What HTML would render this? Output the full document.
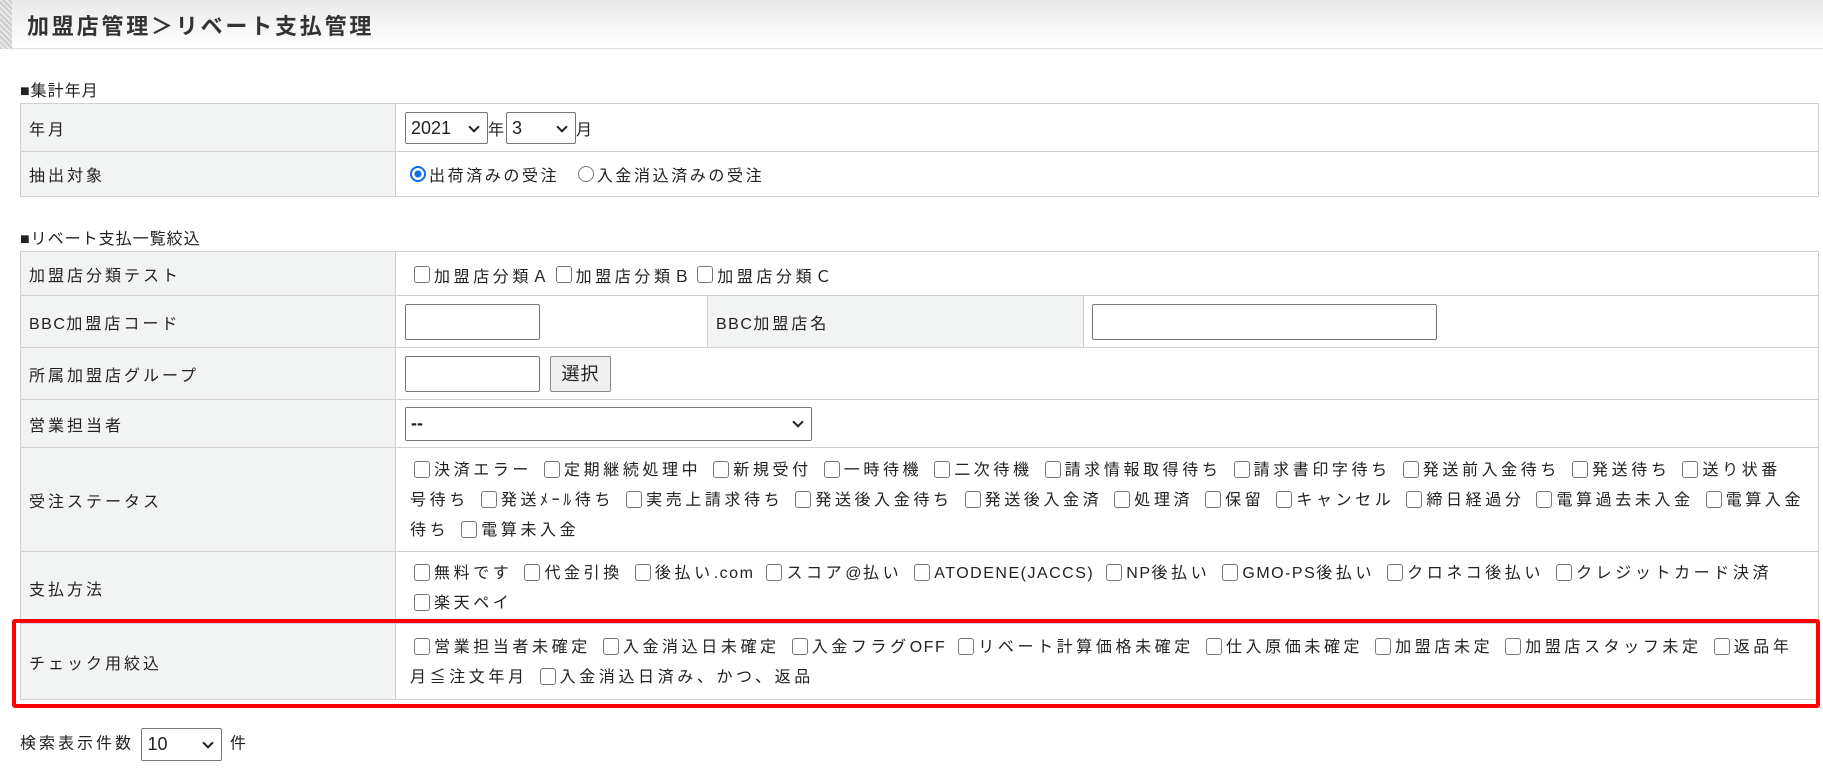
<!DOCTYPE html>
<html><head><meta charset="utf-8"><style>
*{box-sizing:border-box;margin:0;padding:0}
body{width:1823px;height:783px;overflow:hidden;background:#fff;font-family:"Liberation Sans","Noto Sans CJK JP",sans-serif;font-size:16px;color:#222;position:relative;letter-spacing:3.6px}
.title{position:absolute;left:0;top:0;width:1823px;height:49px;background:linear-gradient(#e9e9e9,#fff);border-bottom:1px solid #ddd}
.stripe{position:absolute;left:0;top:0;width:12px;height:49px;background:repeating-linear-gradient(45deg,#ccc 0 2px,#e8e8e8 2px 4px)}
.title h1{position:absolute;left:27px;top:9px;font-size:22px;font-weight:bold;color:#333;letter-spacing:2.8px}
.sec{position:absolute;left:20px;font-size:16px;letter-spacing:1px}
.row{position:absolute;left:20px;width:1799px;border:1px solid #d0d0d0;border-top:none}
.lab{position:absolute;left:0;top:0;bottom:0;width:375px;background:#f2f3f3;border-right:1px solid #d0d0d0;padding-left:8px;display:flex;align-items:center;letter-spacing:3px}
.val{position:absolute;left:376px;top:0;bottom:0;right:0;padding-left:13px;display:flex;align-items:center;white-space:nowrap}
.top{border-top:1px solid #d0d0d0}
.cb{display:inline-block;width:16px;height:17px;border:1px solid #777;border-radius:3px;vertical-align:-3px;margin:0 4px 0 4px;background:#fff}
.ml{line-height:30px;display:block;padding-top:2px}
.a{letter-spacing:1.5px}
.sel{display:inline-block;border:1px solid #767676;border-radius:2px;height:32px;position:relative;vertical-align:middle;background:#fff;padding-left:5px;line-height:30px;font-size:18px;letter-spacing:0}
.sel:after{content:"";position:absolute;right:9px;top:10px;width:6px;height:6px;border-right:2px solid #222;border-bottom:2px solid #222;transform:rotate(45deg)}
.inp{display:inline-block;border:1px solid #767676;border-radius:2px;height:36px;background:#fff;vertical-align:middle}
.rad{display:inline-block;width:16px;height:16px;border-radius:50%;border:1px solid #777;vertical-align:-2px;margin-right:3px}
.rad.on{border:2px solid #0a6cf0;background:radial-gradient(#0a6cf0 0 3px,#fff 4px)}
</style></head><body>
<div class="title"><div class="stripe"></div><h1>加盟店管理＞リベート支払管理</h1></div>

<div class="sec" style="top:77px">■集計年月</div>
<div class="row top" style="top:103px;height:49px"><div class="lab">年月</div><div class="val" style="padding-left:8px;letter-spacing:0"><span class="sel" style="width:83px">2021</span>年 <span class="sel" style="width:70px;margin-left:2px">3</span>月</div></div>
<div class="row" style="top:152px;height:45px"><div class="lab">抽出対象</div><div class="val" style="letter-spacing:2.6px"><span class="rad on"></span>出荷済みの受注　<span class="rad"></span>入金消込済みの受注</div></div>

<div class="sec" style="top:225px">■リベート支払一覧絞込</div>
<div class="row top" style="top:251px;height:45px"><div class="lab">加盟店分類テスト</div><div class="val" style="padding-top:2px;letter-spacing:3.6px"><span class="cb"></span>加盟店分類Ａ <span class="cb"></span>加盟店分類Ｂ <span class="cb"></span>加盟店分類Ｃ</div></div>
<div class="row" style="top:296px;height:52px"><div class="lab"><span><span class="a">BBC</span>加盟店コード</span></div><div class="val" style="padding-left:8px;right:auto;width:310px"><span class="inp" style="width:135px"></span></div>
<div class="lab" style="left:686px;width:377px;border-left:1px solid #d0d0d0"><span><span class="a">BBC</span>加盟店名</span></div><div class="val" style="left:1063px;padding-left:8px"><span class="inp" style="width:345px"></span></div></div>
<div class="row" style="top:348px;height:52px"><div class="lab">所属加盟店グループ</div><div class="val" style="padding-left:8px"><span class="inp" style="width:135px"></span><span style="display:inline-block;margin-left:10px;width:61px;height:36px;border:1px solid #888;border-radius:2px;background:#efefef;text-align:center;line-height:34px;font-size:18px;letter-spacing:1px">選択</span></div></div>
<div class="row" style="top:400px;height:48px"><div class="lab">営業担当者</div><div class="val" style="padding-left:8px"><span class="sel" style="width:407px;height:34px;font-weight:bold">--</span></div></div>
<div class="row" style="top:448px;height:104px"><div class="lab">受注ステータス</div><div class="val"><span class="ml"><span class="cb"></span>決済エラー <span class="cb"></span>定期継続処理中 <span class="cb"></span>新規受付 <span class="cb"></span>一時待機 <span class="cb"></span>二次待機 <span class="cb"></span>請求情報取得待ち <span class="cb"></span>請求書印字待ち <span class="cb"></span>発送前入金待ち <span class="cb"></span>発送待ち <span class="cb"></span>送り状番<br>号待ち <span class="cb"></span>発送ﾒｰﾙ待ち <span class="cb"></span>実売上請求待ち <span class="cb"></span>発送後入金待ち <span class="cb"></span>発送後入金済 <span class="cb"></span>処理済 <span class="cb"></span>保留 <span class="cb"></span>キャンセル <span class="cb"></span>締日経過分 <span class="cb"></span>電算過去未入金 <span class="cb"></span>電算入金<br>待ち <span class="cb"></span>電算未入金</span></div></div>
<div class="row" style="top:552px;height:72px"><div class="lab">支払方法</div><div class="val"><span class="ml"><span class="cb"></span>無料です <span class="cb"></span>代金引換 <span class="cb"></span>後払い<span class="a">.com</span> <span class="cb"></span>スコア<span class="a">@</span>払い <span class="cb"></span><span class="a">ATODENE(JACCS)</span> <span class="cb"></span><span class="a">NP</span>後払い <span class="cb"></span><span class="a">GMO-PS</span>後払い <span class="cb"></span>クロネコ後払い <span class="cb"></span>クレジットカード決済<br><span class="cb"></span>楽天ペイ</span></div></div>
<div class="row" style="top:624px;height:76px"><div class="lab">チェック用絞込</div><div class="val"><span class="ml"><span class="cb"></span>営業担当者未確定 <span class="cb"></span>入金消込日未確定 <span class="cb"></span>入金フラグ<span class="a">OFF</span> <span class="cb"></span>リベート計算価格未確定 <span class="cb"></span>仕入原価未確定 <span class="cb"></span>加盟店未定 <span class="cb"></span>加盟店スタッフ未定 <span class="cb"></span>返品年<br>月≦注文年月 <span class="cb"></span>入金消込日済み、かつ、返品</span></div></div>
<div style="position:absolute;left:12px;top:619px;width:1808px;height:89px;border:4px solid #f00;border-radius:3px"></div>

<div style="position:absolute;left:20px;top:728px;white-space:nowrap;letter-spacing:3px">検索表示件数 <span class="sel" style="width:81px;height:33px">10</span> 件</div>
</body></html>
